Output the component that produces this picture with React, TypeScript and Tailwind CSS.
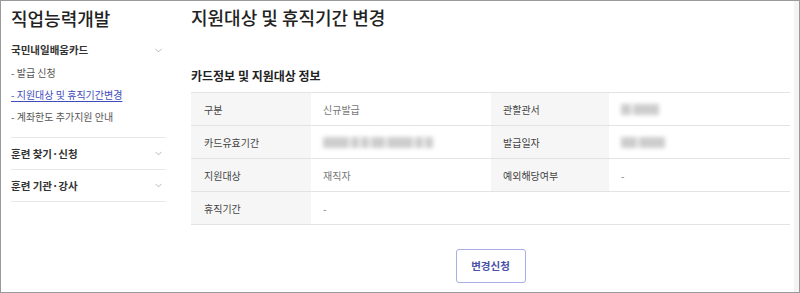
import { ChevronDown } from "lucide-react";

const FONT = { fontFamily: '"Noto Sans CJK KR", "Noto Sans", sans-serif' };

function Blur({ w }: { w: number[] }) {
  return (
    <div className="flex items-center gap-[2px] blur-[2px]">
      {w.map((x, i) => (
        <div key={i} className="h-[11px] bg-[#cdcdcd]" style={{ width: x }} />
      ))}
    </div>
  );
}

function Row({
  l1,
  v1,
  l2,
  v2,
}: {
  l1: string;
  v1: React.ReactNode;
  l2?: string;
  v2?: React.ReactNode;
}) {
  return (
    <div className="flex h-[33px] border-b border-[#e3e3e3] text-[10px] text-[#555]">
      <div className="flex w-[120px] items-center bg-[#f6f6f6] pl-[13px] text-[#444]">{l1}</div>
      <div className={`flex items-center pl-[12px] text-[#777] ${l2 ? "w-[180px]" : "flex-1"}`}>{v1}</div>
      {l2 && (
        <>
          <div className="flex w-[118px] items-center bg-[#f6f6f6] pl-[12px] text-[#444]">{l2}</div>
          <div className="flex flex-1 items-center pl-[12px] text-[#777]">{v2}</div>
        </>
      )}
    </div>
  );
}

export default function App() {
  return (
    <div style={FONT} className="h-[293px] w-[800px] overflow-hidden border border-[#9a9a9a] bg-white">
      <div className="flex h-full border-r-[5px] border-r-[#f4f4f4]">
        {/* 사이드바 */}
        <aside className="w-[178px] pl-[10px] pr-[13px] pt-[4px]">
          <h1 className="text-[18px] font-medium leading-[26px] text-[#222]">직업능력개발</h1>
          <div className="mt-[11px] border-b border-[#e8e8e8] pb-[12px]">
            <div className="flex h-[16px] items-center justify-between pr-[2px] text-[10.5px] font-bold text-[#333]">
              국민내일배움카드
              <ChevronDown size={11} strokeWidth={1.5} className="text-[#999]" />
            </div>
            <ul className="mt-[7px] space-y-[6px] text-[10px] leading-[16px] text-[#555]">
              <li>- 발급 신청</li>
              <li className="text-[#3e4bbd] underline underline-offset-2">- 지원대상 및 휴직기간변경</li>
              <li>- 계좌한도 추가지원 안내</li>
            </ul>
          </div>
          {["훈련 찾기·신청", "훈련 기관·강사"].map((t) => (
            <div
              key={t}
              className="flex h-[32px] items-center justify-between border-b border-[#e8e8e8] pr-[2px] text-[10.5px] font-bold text-[#333]"
            >
              {t}
              <ChevronDown size={11} strokeWidth={1.5} className="text-[#999]" />
            </div>
          ))}
        </aside>

        {/* 본문 */}
        <main className="flex-1 pl-[12px] pr-[4px] pt-[3px]">
          <h2 className="text-[18px] font-medium leading-[26px] text-[#222]">지원대상 및 휴직기간 변경</h2>
          <h3 className="mt-[38px] text-[12px] font-bold leading-[16px] text-[#222]">카드정보 및 지원대상 정보</h3>
          <div className="mt-[8px] border-t border-[#e3e3e3]">
            <Row l1="구분" v1="신규발급" l2="관할관서" v2={<Blur w={[10, 26]} />} />
            <Row l1="카드유효기간" v1={<Blur w={[26, 8, 8, 14, 26, 8, 8]} />} l2="발급일자" v2={<Blur w={[16, 26]} />} />
            <Row l1="지원대상" v1="재직자" l2="예외해당여부" v2="-" />
            <Row l1="휴직기간" v1="-" />
          </div>
          <div className="mt-[24px] flex justify-center">
            <button className="h-[34px] w-[70px] rounded-[3px] border border-[#a9aee8] text-[10.5px] font-bold text-[#4a50a8]">
              변경신청
            </button>
          </div>
        </main>
      </div>
    </div>
  );
}
